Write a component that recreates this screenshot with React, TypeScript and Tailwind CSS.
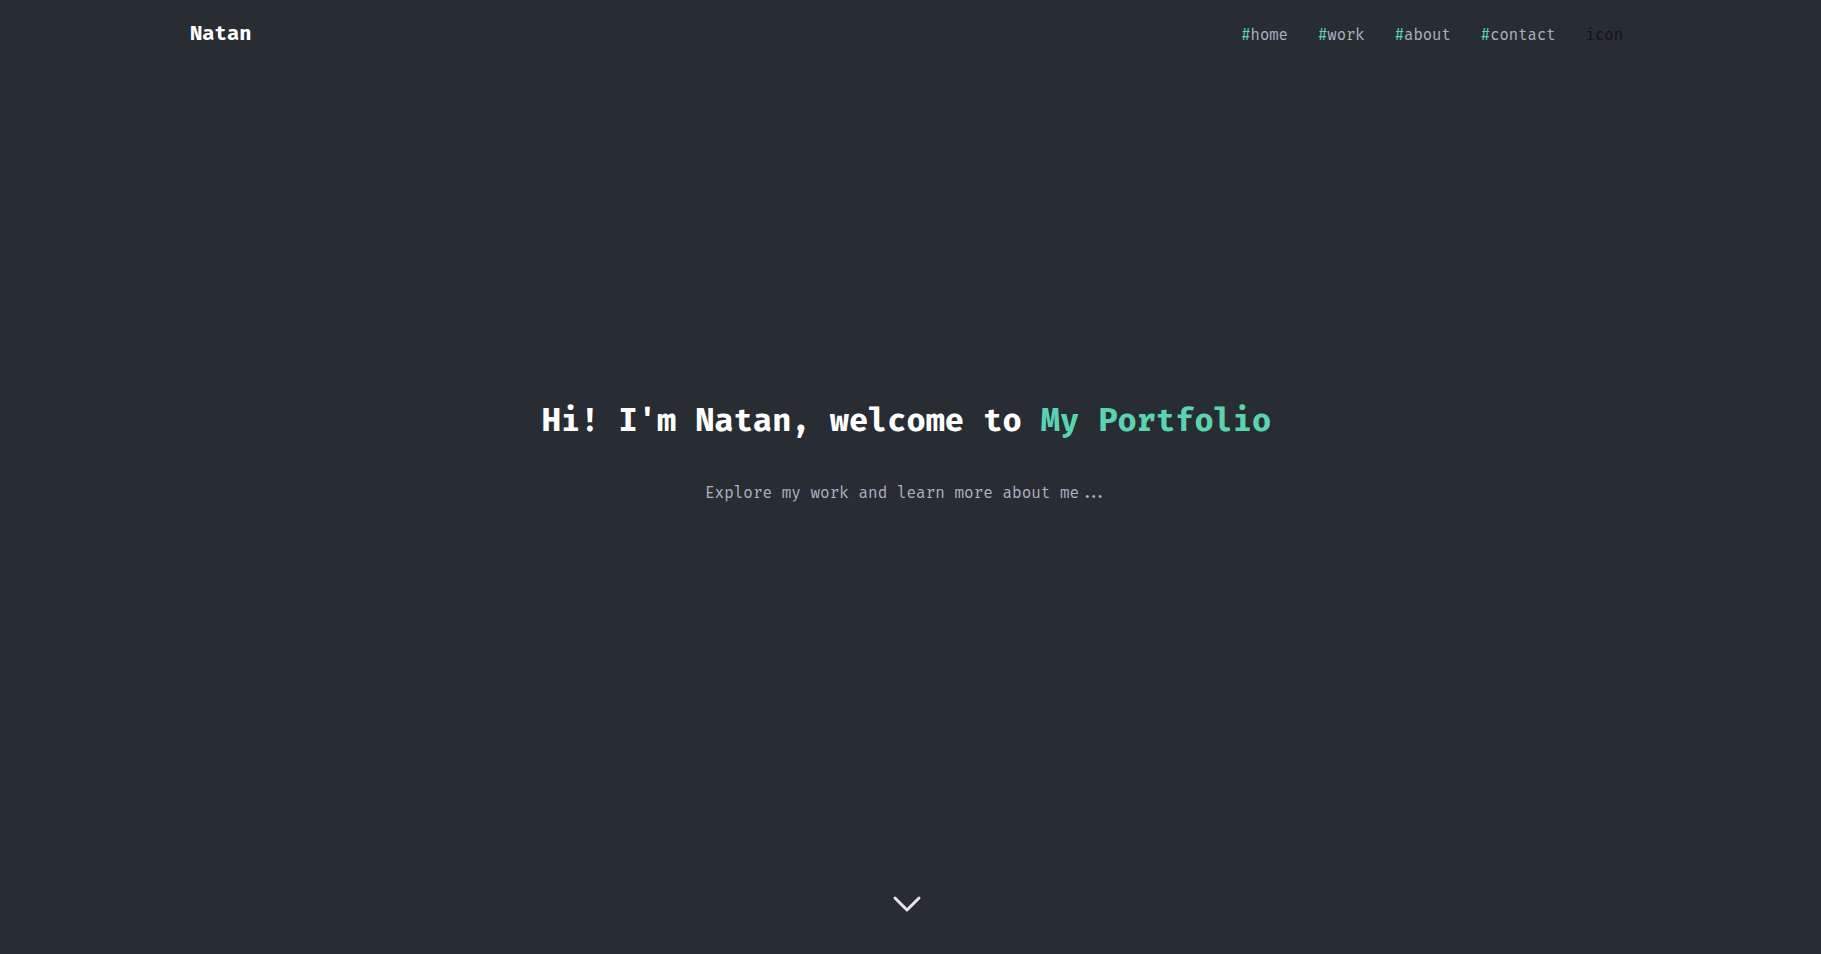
import { FiChevronDown } from 'react-icons/fi';

const NAV = ['home', 'work', 'about', 'contact'];

const mono = "font-['Fira_Code','DejaVu_Sans_Mono','Liberation_Mono',monospace]";

const App = () => {
  return (
    <div className={`min-h-screen w-full bg-[#282c33] pr-2 ${mono} flex flex-col`}>
      <header className="flex items-center justify-between px-[190px] pt-[19px] h-[49px]">
        <span className="text-[20px] font-bold text-white leading-none">Natan</span>
        <nav className="flex items-center gap-[30px] text-[15.2px] leading-none pt-[4px]">
          {NAV.map((item) => (
            <a key={item} href={`#${item}`} className="text-[#abb2bf]">
              <span className="text-[#5ad3b0]">#</span>
              {item}
            </a>
          ))}
          <span className="text-[#111318]">icon</span>
        </nav>
      </header>

      <main className="flex-1 flex flex-col items-center pt-[357px]">
        <h1 className="text-[31.2px] font-bold text-white leading-none">
          Hi! I'm Natan, welcome to <span className="text-[#5ad3b0]">My Portfolio</span>
        </h1>
        <p className="mt-[49px] text-[15.6px] text-[#abb2bf] leading-none">
          Explore my work and learn more about me...
        </p>
      </main>

      <div className="flex justify-center pb-[26px]">
        <FiChevronDown className="text-[#e5e5e5]" size={48} strokeWidth={1.5} />
      </div>
    </div>
  );
};

export default App;
